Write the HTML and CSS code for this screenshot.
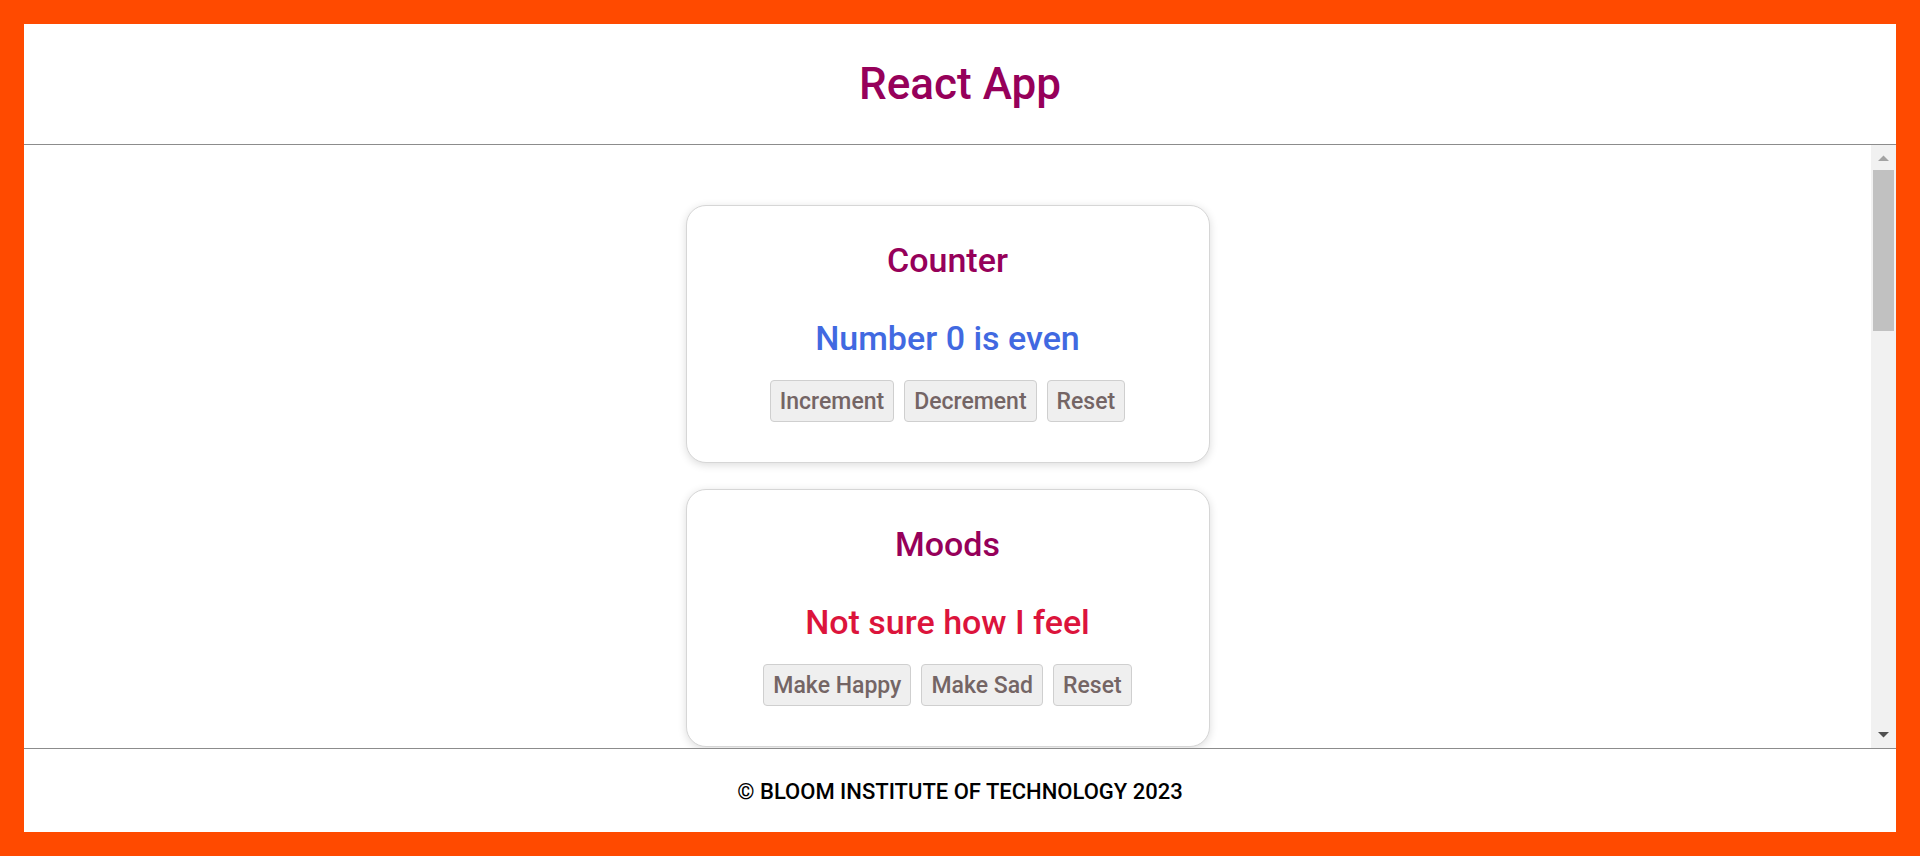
FILE: index.html
```html
<!DOCTYPE html>
<html lang="en">
<head>
<meta charset="utf-8">
<title>React App</title>
<link rel="stylesheet" href="styles.css">
</head>
<body>
<div class="app">
  <header class="app-header">
    <h1 class="app-title">React App</h1>
  </header>
  <div class="app-body">
    <main class="app-main">
      <section class="widget">
        <h2 class="widget-title">Counter</h2>
        <p class="widget-text text-blue">Number 0 is even</p>
        <div class="widget-buttons">
          <button class="btn">Increment</button>
          <button class="btn">Decrement</button>
          <button class="btn">Reset</button>
        </div>
      </section>
      <section class="widget">
        <h2 class="widget-title">Moods</h2>
        <p class="widget-text text-red">Not sure how I feel</p>
        <div class="widget-buttons">
          <button class="btn">Make Happy</button>
          <button class="btn">Make Sad</button>
          <button class="btn">Reset</button>
        </div>
      </section>
    </main>
    <div class="scrollbar" aria-hidden="true">
      <div class="sb-btn">
        <svg width="25" height="25" viewBox="0 0 25 25"><polygon points="7,16 18,16 12.5,10.5" fill="#a3a3a3"/></svg>
      </div>
      <div class="sb-track">
        <div class="sb-thumb"></div>
      </div>
      <div class="sb-btn">
        <svg width="25" height="25" viewBox="0 0 25 25"><polygon points="7,9 18,9 12.5,14.5" fill="#505050"/></svg>
      </div>
    </div>
  </div>
  <footer class="app-footer">
    <p class="footer-text">© BLOOM INSTITUTE OF TECHNOLOGY 2023</p>
  </footer>
</div>
</body>
</html>
```

FILE: styles.css
```css
* {
  box-sizing: border-box;
}

html, body {
  margin: 0;
  padding: 0;
  height: 100%;
}

body {
  font-family: Roboto, "Liberation Sans", sans-serif;
  background: #ffffff;
}

.app {
  height: 100vh;
  border: 24px solid #ff4a00;
  display: flex;
  flex-direction: column;
  background: #ffffff;
}

.app-header {
  height: 121px;
  flex: 0 0 121px;
  border-bottom: 1px solid #8c8c8c;
  display: flex;
  align-items: center;
  justify-content: center;
}

.app-title {
  margin: 0;
  font-size: 44px;
  font-weight: 500;
  line-height: 50px;
  color: #96005a;
}

.app-body {
  flex: 1 1 auto;
  min-height: 0;
  display: flex;
}

.app-main {
  flex: 1 1 auto;
  min-width: 0;
  overflow: hidden;
  display: flex;
  flex-direction: column;
  align-items: center;
  gap: 26px;
  padding: 60px 0 0;
}

.scrollbar {
  flex: 0 0 25px;
  width: 25px;
  background: #f1f1f1;
  display: flex;
  flex-direction: column;
}

.sb-btn {
  flex: 0 0 25px;
  height: 25px;
}

.sb-btn svg {
  display: block;
}

.sb-track {
  flex: 1 1 auto;
}

.sb-thumb {
  height: 161px;
  margin: 0 2px;
  background: #c1c1c1;
}

.widget {
  flex: 0 0 auto;
  width: 524px;
  border: 1px solid #d6d6d6;
  border-radius: 20px;
  box-shadow: 0 2px 8px rgba(0, 0, 0, 0.14);
  padding: 34px 0 40px;
  display: flex;
  flex-direction: column;
  align-items: center;
  background: #ffffff;
}

.widget-title {
  margin: 0;
  font-size: 34px;
  font-weight: 500;
  line-height: 40px;
  color: #96005a;
}

.widget-text {
  margin: 38px 0 0;
  font-size: 34px;
  font-weight: 500;
  line-height: 40px;
}

.text-blue {
  color: #4169e1;
}

.text-red {
  color: #dc143c;
}

.widget-buttons {
  margin-top: 22px;
  display: flex;
  gap: 10px;
  justify-content: center;
}

.btn {
  height: 42px;
  padding: 2px 9px 0;
  border: 1px solid #cfcfcf;
  border-radius: 4px;
  background: #efefef;
  color: #746565;
  font-family: Roboto, "Liberation Sans", sans-serif;
  font-size: 23px;
  font-weight: 500;
  line-height: 38px;
}

.app-footer {
  flex: 0 0 84px;
  height: 84px;
  padding-top: 2px;
  border-top: 1px solid #8c8c8c;
  display: flex;
  align-items: center;
  justify-content: center;
}

.footer-text {
  margin: 0;
  font-size: 22px;
  font-weight: 500;
  line-height: 26px;
  color: #000000;
}
```
